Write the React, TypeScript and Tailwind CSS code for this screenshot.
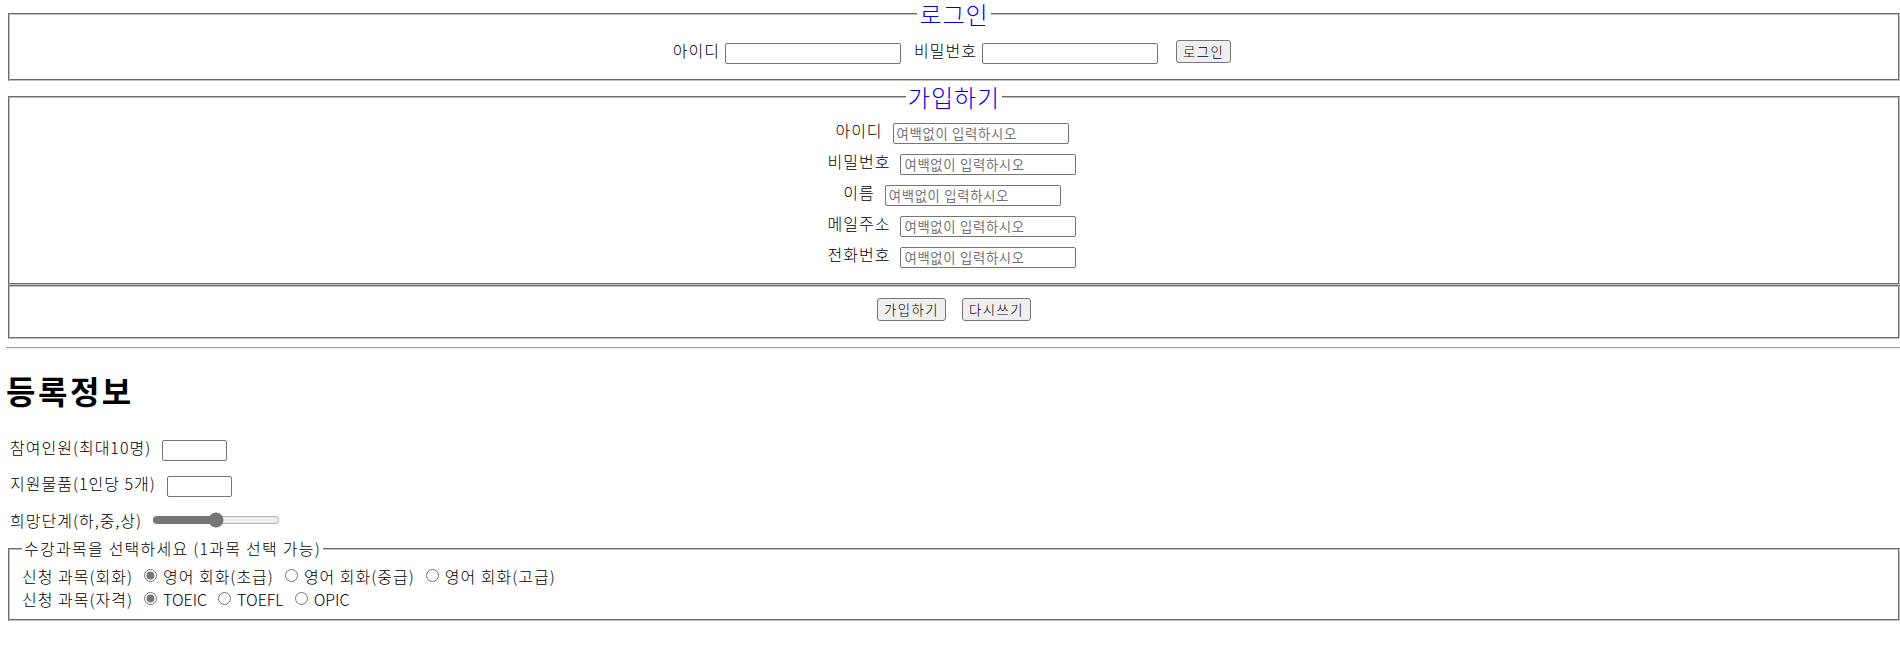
import React from 'react';

const fieldsetCls = "ml-[2px] border-2 [border-style:groove] border-[#c0c0c0] px-[12px]";
const inputCls =
  "h-[21px] border border-[#767676] rounded-[2px] bg-white px-[3px] text-[13.33px] font-normal tracking-[0.7px] text-black placeholder:text-[#757575] outline-none";
const buttonCls =
  "h-[23px] px-[6px] border border-[#767676] rounded-[3px] bg-[#efefef] text-[13.33px] tracking-[1.5px] leading-[19px] text-black";
const blueLegend = "mx-auto mt-[1px] px-[2px] text-[24px] leading-[28px] tracking-[1px] text-[#0000ff]";
const radioCls = "ml-[11px] mr-[6px] w-[13px] h-[13px] accent-[#767676]";
const latin = "tracking-normal";

const joinFields = ['아이디', '비밀번호', '이름', '메일주소', '전화번호'];

export default function App() {
  return (
    <div className="min-h-screen bg-white pl-[6px] text-[16px] font-light tracking-[1px] text-black font-['Noto_Sans_CJK_KR','Malgun_Gothic',sans-serif]">
      {/* 로그인 */}
      <fieldset className={`${fieldsetCls} pt-[12px] pb-[15px]`}>
        <legend className={blueLegend}>로그인</legend>
        <div className="flex justify-center items-start pr-[4px]">
          <span className="leading-[21px]">아이디</span>
          <input type="text" className={`${inputCls} ml-[5px] mt-[3px] w-[176px]`} />
          <span className="ml-[13px] leading-[21px]">비밀번호</span>
          <input type="password" className={`${inputCls} ml-[5px] mt-[3px] w-[176px]`} />
          <button className={`${buttonCls} ml-[18px]`}>로그인</button>
        </div>
      </fieldset>

      {/* 가입하기 */}
      <fieldset className={`${fieldsetCls} mt-[2px] pt-[9px] pb-[15px]`}>
        <legend className="mx-auto px-[2px] text-[24px] leading-[28px] tracking-[1px] text-[#0000ff]">가입하기</legend>
        <div className="flex flex-col items-center gap-[7px] pr-[4px]">
          {joinFields.map((label) => (
            <div key={label} className="flex items-start h-[24px]">
              <span className="leading-[21px]">{label}</span>
              <input
                type="text"
                placeholder="여백없이 입력하시오"
                className={`${inputCls} ml-[10px] mt-[3px] w-[176px]`}
              />
            </div>
          ))}
        </div>
      </fieldset>

      <fieldset className={`${fieldsetCls} pt-[11px] pb-[16px]`}>
        <div className="flex justify-center gap-[16px]">
          <button className={buttonCls}>가입하기</button>
          <button className={buttonCls}>다시쓰기</button>
        </div>
      </fieldset>

      <hr className="my-[8px] h-0 border-t border-t-[#9a9a9a] border-b border-b-[#eeeeee]" />

      {/* 등록정보 */}
      <h1 className="mt-[21px] text-[32px] font-bold tracking-[2.5px] leading-[40px]">등록정보</h1>

      <div className="mt-[27px] pl-[4px] flex items-start h-[24px]">
        <span className="leading-[21px]">참여인원(최대10명)</span>
        <input type="text" className={`${inputCls} ml-[11px] mt-[3px] w-[65px]`} />
      </div>
      <div className="mt-[12px] pl-[4px] flex items-start h-[24px]">
        <span className="leading-[21px]">지원물품(1인당 5개)</span>
        <input type="text" className={`${inputCls} ml-[11px] mt-[3px] w-[65px]`} />
      </div>
      <div className="mt-[13px] pl-[4px] flex items-start h-[24px]">
        <span className="leading-[21px]">희망단계(하,중,상)</span>
        <input
          type="range"
          min={1}
          max={3}
          defaultValue={2}
          className="ml-[10px] mt-[2px] w-[128px] h-[16px] accent-[#767676]"
        />
      </div>

      {/* 수강과목 */}
      <fieldset className={`${fieldsetCls} mt-[4px] pt-[5px] pb-[9px]`}>
        <legend className="px-[2px] leading-[21px] tracking-[1.25px]">수강과목을 선택하세요 (1과목 선택 가능)</legend>
        <div className="flex items-center h-[23px]">
          <span>신청 과목(회화)</span>
          <input type="radio" name="talk" defaultChecked className={radioCls} />
          <span>영어 회화(초급)</span>
          <input type="radio" name="talk" className={radioCls} />
          <span>영어 회화(중급)</span>
          <input type="radio" name="talk" className={radioCls} />
          <span>영어 회화(고급)</span>
        </div>
        <div className="flex items-center h-[23px]">
          <span>신청 과목(자격)</span>
          <input type="radio" name="cert" defaultChecked className={radioCls} />
          <span className={latin}>TOEIC</span>
          <input type="radio" name="cert" className={radioCls} />
          <span className={latin}>TOEFL</span>
          <input type="radio" name="cert" className={radioCls} />
          <span className={latin}>OPIC</span>
        </div>
      </fieldset>
    </div>
  );
}
